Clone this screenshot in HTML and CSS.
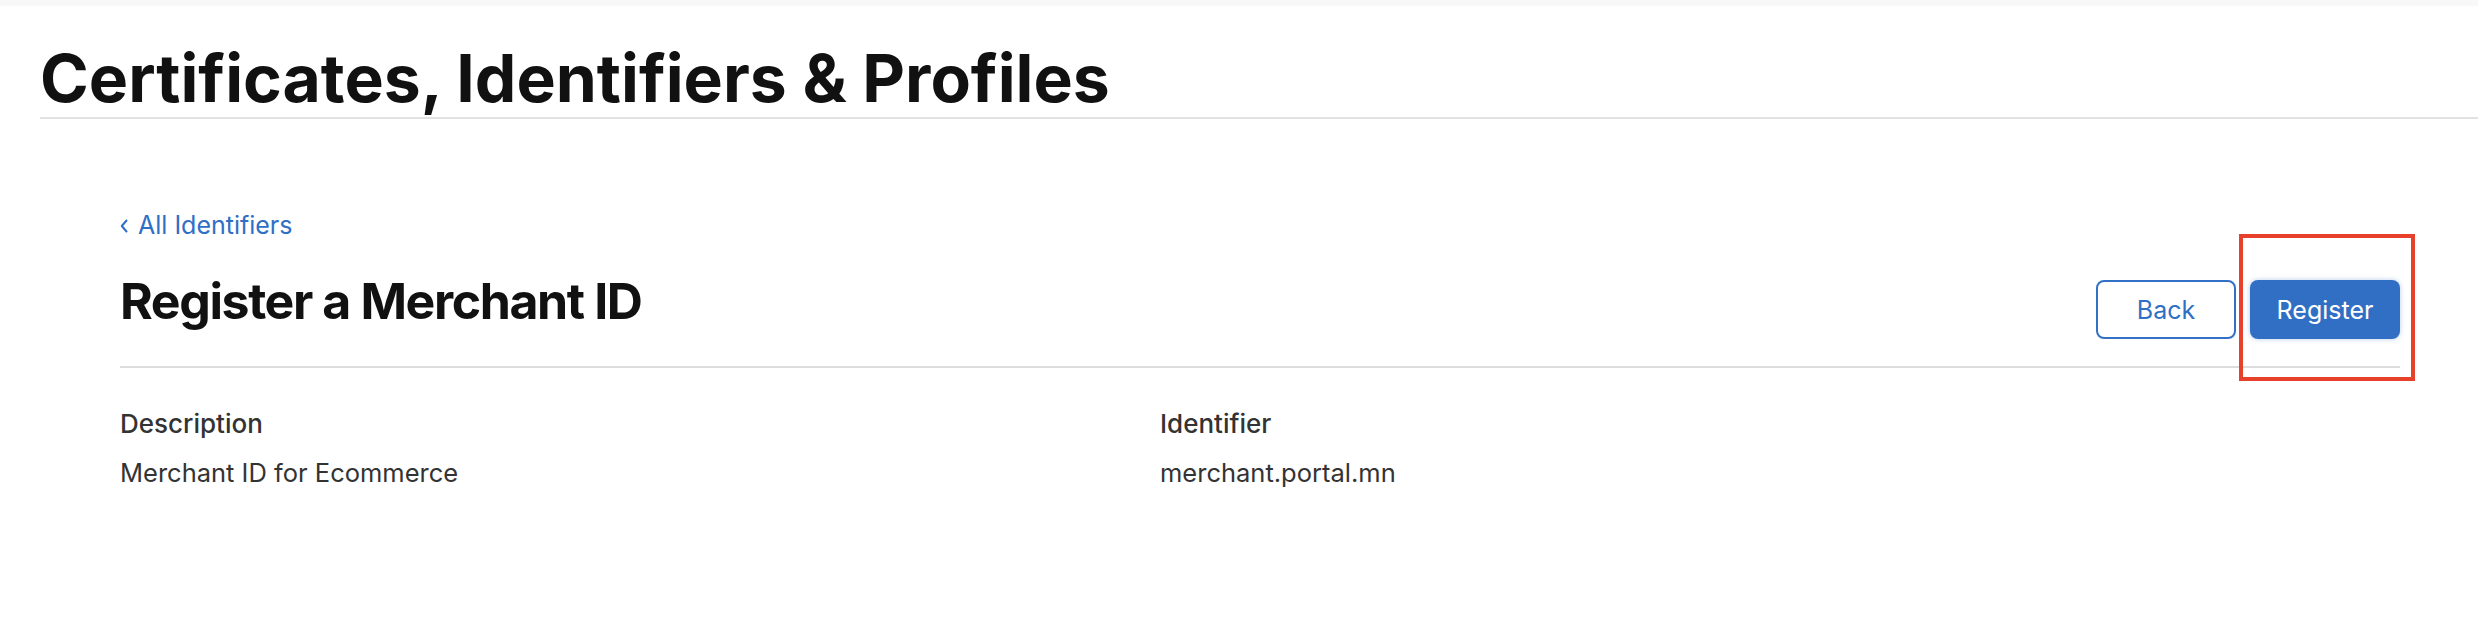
FILE: index.html
```html
<!DOCTYPE html>
<html lang="en">
<head>
<meta charset="utf-8">
<title>Certificates, Identifiers &amp; Profiles</title>
<link rel="stylesheet" href="styles.css">
</head>
<body>
<div class="topbar"></div>
<header class="page-header">
  <h1 class="page-title">Certificates, Identifiers &amp; Profiles</h1>
</header>
<main class="content">
  <a class="back-link" href="#">
    <svg class="chev" width="8" height="14" viewBox="0 0 8 14" aria-hidden="true"><path d="M6.5 1.5 L1.8 7 L6.5 12.5" fill="none" stroke="currentColor" stroke-width="2" stroke-linecap="round" stroke-linejoin="round"/></svg>
    <span>All Identifiers</span>
  </a>
  <div class="head-row">
    <h2 class="section-title">Register a Merchant ID</h2>
    <div class="actions">
      <button class="btn btn-outline" type="button">Back</button>
      <div class="btn-wrap">
        <button class="btn btn-primary" type="button">Register</button>
        <span class="highlight"></span>
      </div>
    </div>
  </div>
  <div class="details">
    <div class="field">
      <div class="label">Description</div>
      <div class="value">Merchant ID for Ecommerce</div>
    </div>
    <div class="field">
      <div class="label">Identifier</div>
      <div class="value">merchant.portal.mn</div>
    </div>
  </div>
</main>
</body>
</html>
```
FILE: styles.css
```css
* { box-sizing: border-box; }
html, body { margin: 0; padding: 0; background: #ffffff; }
body {
  font-family: Inter, "Liberation Sans", Arial, sans-serif;
  color: #333333;
}
.topbar { height: 6px; background: #f8f8f8; }

.page-header {
  margin-left: 40px;
  border-bottom: 2px solid #e2e2e2;
}
.page-title {
  margin: 33px 0 0 0;
  font-size: 66px;
  line-height: 78px;
  font-weight: 700;
  color: #111111;
  letter-spacing: 0;
}

.content { padding: 0 78px 0 120px; }

.back-link {
  display: flex;
  align-items: center;
  gap: 10px;
  margin-top: 90px;
  height: 32px;
  font-size: 25px;
  line-height: 32px;
  color: #2f6fc6;
  text-decoration: none;
  width: max-content;
}
.back-link .chev { margin-top: 2px; }

.head-row {
  display: flex;
  justify-content: space-between;
  align-items: flex-start;
  margin-top: 30px;
  padding-bottom: 27px;
  border-bottom: 2px solid #dcdcdc;
}
.section-title {
  margin: 0;
  font-size: 50px;
  line-height: 60px;
  font-weight: 700;
  color: #111111;
  letter-spacing: -1.4px;
}
.actions {
  display: flex;
  gap: 14px;
  margin-top: 9px;
}
.btn-wrap { position: relative; }
.btn {
  height: 59px;
  border-radius: 8px;
  font-family: Inter, "Liberation Sans", Arial, sans-serif;
  font-size: 25px;
  font-weight: 400;
  cursor: pointer;
}
.btn-outline {
  min-width: 140px;
  padding: 0 24px;
  background: #ffffff;
  color: #2f6fc6;
  border: 2px solid #3371c6;
}
.btn-primary {
  min-width: 150px;
  padding: 0 25px;
  background: #316fc4;
  color: #ffffff;
  border: 0;
  box-shadow: 0 0 5px rgba(49, 111, 196, 0.35);
}
.highlight {
  position: absolute;
  left: -11px;
  top: -46px;
  right: -15px;
  bottom: -42px;
  border: 4px solid #e8412b;
  pointer-events: none;
}

.details {
  display: grid;
  grid-template-columns: 1040px 1fr;
  margin-top: 39px;
}
.label {
  font-size: 26px;
  line-height: 34px;
  font-weight: 500;
  color: #333333;
}
.value {
  margin-top: 15px;
  font-size: 25.5px;
  line-height: 34px;
  font-weight: 400;
  color: #333333;
}
```
